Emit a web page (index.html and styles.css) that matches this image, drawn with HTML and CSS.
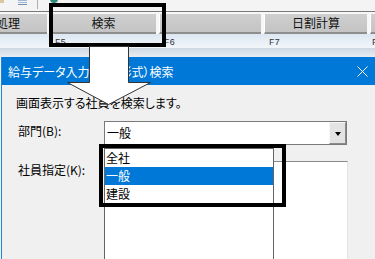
FILE: index.html
```html
<!DOCTYPE html>
<html lang="ja">
<head>
  <meta charset="UTF-8" />
  <title>給与データ入力 検索</title>
  <link rel="stylesheet" href="styles.css">
</head>
<body>
  <div class="screen">
    <div class="toolbar">
      <span class="tb-doc"></span>
      <span class="tb-list"></span>
      <span class="tb-sep"></span>
      <span class="tb-round"></span>
    </div>

    <div class="fkey-btns">
      <div class="fkey-btn first"><span>処理</span></div>
      <div class="fkey-btn">検索</div>
      <div class="fkey-btn"></div>
      <div class="fkey-btn">日割計算</div>
      <div class="fkey-btn"></div>
    </div>
    <div class="fkey-labels">
      <span></span>
      <span>F5</span>
      <span>F6</span>
      <span>F7</span>
      <span>F</span>
    </div>
    <div class="desk"></div>

    <div class="dialog">
      <div class="dlg-title">
        <span>給与データ入力（一覧形式）検索</span>
        <svg class="close" width="11" height="11" viewBox="0 0 11 11">
          <path d="M0.5 0.5 L10.5 10.5 M10.5 0.5 L0.5 10.5" stroke="#fff" stroke-width="1" fill="none"/>
        </svg>
      </div>
      <div class="dlg-body">
        <p class="lead">画面表示する社員を検索します。</p>
        <div class="field-row">
          <label>部門(B):</label>
          <div class="combo">
            <span class="combo-text">一般</span>
            <span class="combo-btn"><i class="tri"></i></span>
          </div>
        </div>
        <div class="field-row emp">
          <label>社員指定(K):</label>
          <div class="emp-list"></div>
        </div>
      </div>
    </div>

    <ul class="dropdown">
      <li>全社</li>
      <li class="selected">一般</li>
      <li>建設</li>
    </ul>

    <div class="mark mark-key"></div>
    <div class="mark mark-list"></div>

    <svg class="arrow" width="88" height="62" viewBox="0 0 88 62">
      <polygon points="23.5,0.5 62.5,0.5 62.5,36.5 84.5,36.5 42.5,58.5 1.5,36.5 23.5,36.5" fill="#fff" stroke="#333" stroke-width="1"/>
    </svg>
  </div>
</body>
</html>
```

FILE: styles.css
```css
body {
  margin: 0;
  background: #f0f0f0;
  font-family: "Noto Sans CJK JP", "Liberation Sans", sans-serif;
  color: #000;
}

.screen {
  position: relative;
  width: 375px;
  height: 259px;
  overflow: hidden;
}

/* ツールバー（上端で切れている） */
.toolbar {
  height: 11px;
  background: #f4f4f4;
  border-bottom: 1px solid #7a7a7a;
  position: relative;
}

.tb-doc {
  position: absolute;
  left: 0;
  top: 0;
  width: 4px;
  height: 3px;
  background: #d9c7a0;
}

.tb-list {
  position: absolute;
  left: 18px;
  top: 0;
  width: 9px;
  height: 4px;
  border-bottom: 1px solid #6f8fb5;
  background: linear-gradient(#9fb6d2 0 1px, transparent 1px 2px, #9fb6d2 2px 3px, transparent 3px);
}

.tb-sep {
  position: absolute;
  left: 37px;
  top: 0;
  width: 1px;
  height: 9px;
  background: #b0b0b0;
}

.tb-round {
  position: absolute;
  left: 50px;
  top: -5px;
  width: 8px;
  height: 8px;
  border-radius: 50%;
  background: #2e8b7a;
}

/* ファンクションキー */
.fkey-btns {
  display: grid;
  grid-template-columns: 47px 106px 102px 103px 1fr;
  column-gap: 3px;
  background: #f7f7f7;
  padding-top: 2px;
}

.fkey-btn {
  height: 18px;
  background: linear-gradient(#cfcfcf, #c4c4c4);
  border-left: 1px solid #fff;
  border-bottom: 2px solid #8e8e8e;
  font-size: 12px;
  line-height: 18px;
  text-align: center;
  color: #111;
  white-space: nowrap;
}

.fkey-btn.first {
  border-left: none;
  display: flex;
  justify-content: flex-end;
  padding-right: 27px;
  overflow: hidden;
}

.fkey-labels {
  display: grid;
  grid-template-columns: 47px 106px 102px 103px 1fr;
  column-gap: 3px;
  height: 14px;
  background: linear-gradient(#dde7f2, #f2f6fa);
  font-family: "Liberation Mono", monospace;
  font-size: 9px;
  line-height: 11px;
  color: #333;
}

.fkey-labels span {
  padding: 4px 0 0 5px;
}

.fkey-labels span:last-child {
  padding-left: 2px;
}

.desk {
  height: 9px;
  background: linear-gradient(#cdd8e4, #e8edf2);
}

/* ダイアログ */
.dialog {
  margin-left: 1px;
  border-left: 1px solid #2383d8;
}

.dlg-title {
  height: 28px;
  background: #0078d7;
  color: #fff;
  font-size: 12px;
  display: flex;
  align-items: center;
  justify-content: space-between;
  padding: 0 7px 0 6px;
  font-feature-settings: "palt";
}

.dlg-body {
  background: #f0f0f0;
  padding: 10px 0 0 14px;
  height: 200px;
}

.lead {
  margin: 0;
  font-size: 12px;
  line-height: 16px;
  font-feature-settings: "palt";
}

.field-row {
  display: grid;
  grid-template-columns: 88px 243px;
  margin-top: 10px;
}

.field-row label {
  font-size: 12px;
  line-height: 16px;
  padding: 2px 0 0 2px;
}

.field-row.emp {
  margin-top: 16px;
  grid-template-columns: 88px 244px;
}

.field-row.emp label {
  padding-top: 1px;
}

.combo {
  height: 24px;
  box-sizing: border-box;
  border: 1px solid #7a7a7a;
  background: #fff;
  display: flex;
  justify-content: space-between;
}

.combo-text {
  font-size: 12px;
  line-height: 22px;
  padding-left: 2px;
}

.combo-btn {
  width: 17px;
  box-sizing: border-box;
  background: #e3e3e3;
  border: 1px solid;
  border-color: #f8f8f8 #8a8a8a #8a8a8a #f8f8f8;
  display: flex;
  align-items: center;
  justify-content: center;
}

.tri {
  width: 0;
  height: 0;
  border-left: 3.5px solid transparent;
  border-right: 3.5px solid transparent;
  border-top: 4px solid #000;
  margin-top: 2px;
}

.emp-list {
  height: 120px;
  background: #fff;
  border: 1px solid;
  border-color: #8a8a8a #e3e3e3 #e3e3e3 #8a8a8a;
}

/* 開いたドロップダウン */
.dropdown {
  position: absolute;
  left: 104px;
  top: 148px;
  width: 168px;
  height: 130px;
  margin: 0;
  padding: 0;
  list-style: none;
  background: #fff;
  border: 1px solid #646464;
}

.dropdown li {
  height: 18px;
  font-size: 12px;
  line-height: 18px;
  padding-left: 1px;
}

.dropdown li.selected {
  background: #0078d7;
  color: #fff;
}

/* 強調枠と矢印 */
.mark {
  position: absolute;
  box-sizing: border-box;
  border: 4px solid #000;
}

.mark-key {
  left: 49px;
  top: 3px;
  width: 117px;
  height: 44px;
}

.mark-list {
  left: 99px;
  top: 144px;
  width: 187px;
  height: 63px;
}

.arrow {
  position: absolute;
  left: 66px;
  top: 46px;
}
```
